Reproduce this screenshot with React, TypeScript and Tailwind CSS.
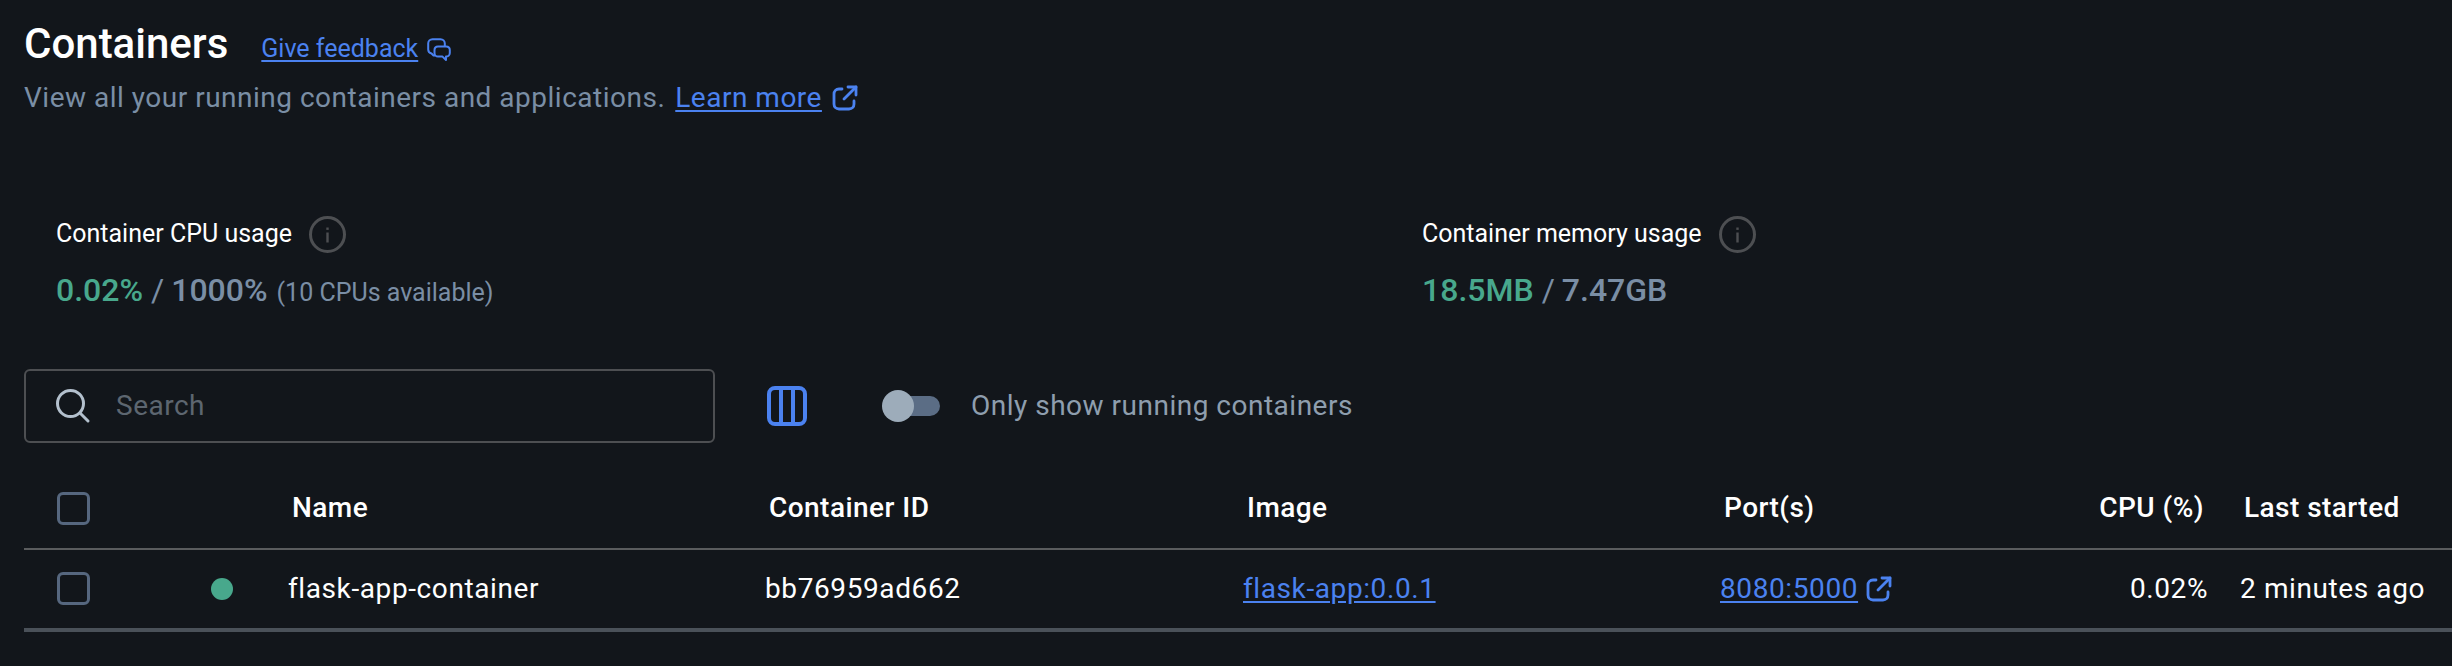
import React from 'react';

const Checkbox: React.FC = () => <div className="h-[33px] w-[33px] rounded-[6px] border-[3px] border-[#56677f]" />;

const InfoIcon: React.FC = () => (
  <svg className="h-[37px] w-[37px]" fill="none" viewBox="0 0 37 37">
    <circle cx="18.5" cy="18.5" r="17" stroke="#4d4f52" strokeWidth="3" />
    <rect fill="#4d4f52" height="10" width="2.4" x="17.3" y="16.5" />
    <rect fill="#4d4f52" height="2.4" width="2.4" x="17.3" y="11.5" />
  </svg>
);

const FeedbackIcon: React.FC = () => (
  <svg className="h-[24px] w-[24px]" fill="none" stroke="#4b82f0" strokeLinejoin="round" strokeWidth="2" viewBox="0 0 24 24">
    <path d="M8 17.5H6.5L4.5 15.5C2.5 15 1.2 13.4 1.2 11.5V5.5C1.2 3 3 1.2 5.5 1.2H13.5C16 1.2 17.8 3 17.8 5.5V8" />
    <path d="M11 8.5H19C21.2 8.5 22.8 10 22.8 12V15C22.8 17 21.2 18.6 19 18.6V22L15.5 18.6H11C9 18.6 7.5 17 7.5 15V12C7.5 10 9 8.5 11 8.5Z" />
  </svg>
);

const OpenIcon: React.FC = () => (
  <svg className="h-[26px] w-[26px]" fill="none" stroke="#4b82f0" strokeLinecap="round" strokeLinejoin="round" strokeWidth="2.8" viewBox="0 0 26 26">
    <path d="M10 4H7C4 4 2 6 2 9V19C2 22 4 24 7 24H17C20 24 22 22 22 19V16" />
    <path d="M16 2H24V10" />
    <path d="M24 2L12 14" />
  </svg>
);

const ColumnsIcon: React.FC = () => (
  <svg className="h-[40px] w-[40px]" fill="none" stroke="#4b82f0" strokeWidth="4" viewBox="0 0 40 40">
    <rect height="36" rx="6" width="36" x="2" y="2" />
    <path d="M14 2V38M26 2V38" />
  </svg>
);

const SearchIcon: React.FC = () => (
  <svg className="h-[36px] w-[36px]" fill="none" stroke="#b3c0cd" strokeLinecap="round" strokeWidth="3" viewBox="0 0 36 36">
    <circle cx="15.5" cy="15.5" r="13" />
    <path d="M25 25L33 33" />
  </svg>
);

const App: React.FC = () => {
  return (
    <div className="h-[666px] w-[2452px] overflow-hidden bg-[#12161b] pl-[24px] font-['Roboto',sans-serif]">
      <div className="flex h-[69px] items-end">
        <h1 className="text-[42px] leading-[50px] font-medium text-white">Containers</h1>
        <a className="mb-[4px] ml-[33px] text-[25px] leading-[32px] text-[#4b82f0] underline underline-offset-[3px]" href="#">
          Give feedback
        </a>
        <span className="mb-[7px] ml-[9px]">
          <FeedbackIcon />
        </span>
      </div>
      <div className="mt-[11px] flex h-[36px] items-center text-[28px] tracking-[0.5px] text-[#7a8ea5]">
        <span>View all your running containers and applications.</span>
        <a className="ml-[10px] text-[#4b82f0] underline underline-offset-[3px]" href="#">
          Learn more
        </a>
        <span className="ml-[10px]">
          <OpenIcon />
        </span>
      </div>

      <div className="mt-[100px] flex h-[93px] pl-[32px]">
        <div className="w-[1366px]">
          <div className="flex h-[36px] items-center gap-[17px] text-[25px] text-white">
            Container CPU usage
            <InfoIcon />
          </div>
          <div className="mt-[14px] flex h-[40px] items-baseline text-[32px] font-medium text-[#7a8ea5]">
            <span className="text-[#48a88c]">0.02%</span>
            <span className="ml-[8px] font-normal">/</span>
            <span className="ml-[7px]">1000%</span>
            <span className="ml-[9px] text-[25px] font-normal">(10 CPUs available)</span>
          </div>
        </div>
        <div>
          <div className="flex h-[36px] items-center gap-[17px] text-[25px] text-white">
            Container memory usage
            <InfoIcon />
          </div>
          <div className="mt-[14px] flex h-[40px] items-baseline text-[32px] font-medium text-[#7a8ea5]">
            <span className="text-[#48a88c]">18.5MB</span>
            <span className="ml-[8px] font-normal">/</span>
            <span className="ml-[7px]">7.47GB</span>
          </div>
        </div>
      </div>

      <div className="mt-[60px] flex h-[74px] items-center">
        <div className="flex h-[74px] w-[691px] items-center rounded-[6px] border-2 border-[#4d4f52] pl-[29px]">
          <SearchIcon />
          <span className="ml-[25px] text-[28px] tracking-[0.5px] text-[#5d6670]">Search</span>
        </div>
        <span className="ml-[52px]">
          <ColumnsIcon />
        </span>
        <div className="relative ml-[80px] h-[20px] w-[53px] rounded-full bg-[#5b6d85]">
          <div className="absolute top-[-6px] left-[-5px] h-[32px] w-[32px] rounded-full bg-[#9dacba]" />
        </div>
        <span className="ml-[31px] text-[28px] tracking-[0.5px] text-[#8e9eae]">Only show running containers</span>
      </div>

      <div className="mt-[31px] grid h-[76px] grid-cols-[268px_477px_478px_477px_331px_149px_1fr] items-center border-b-2 border-[#5a5c5e] pb-[6px] text-[28px] font-medium tracking-[0.45px] text-white">
        <div className="pl-[33px]">
          <Checkbox />
        </div>
        <span>Name</span>
        <span>Container ID</span>
        <span>Image</span>
        <span>Port(s)</span>
        <span className="text-right whitespace-nowrap">CPU (%)</span>
        <span className="pl-[40px] whitespace-nowrap">Last started</span>
      </div>
      <div className="grid h-[82px] grid-cols-[264px_477px_478px_477px_340px_148px_1fr] items-center border-b-[4px] border-[#4a5159] pb-[1px] text-[28px] tracking-[0.6px] text-white">
        <div className="flex items-center pl-[33px]">
          <Checkbox />
          <div className="ml-[121px] h-[22px] w-[22px] rounded-full bg-[#48a88c]" />
        </div>
        <span>flask-app-container</span>
        <span>bb76959ad662</span>
        <a className="text-[#4b82f0] underline underline-offset-[3px]" href="#">
          flask-app:0.0.1
        </a>
        <span className="flex items-center">
          <a className="text-[#4b82f0] underline underline-offset-[3px]" href="#">
            8080:5000
          </a>
          <span className="ml-[8px]">
            <OpenIcon />
          </span>
        </span>
        <span className="text-right">0.02%</span>
        <span className="pl-[32px] whitespace-nowrap">2 minutes ago</span>
      </div>
    </div>
  );
};

export default App;
